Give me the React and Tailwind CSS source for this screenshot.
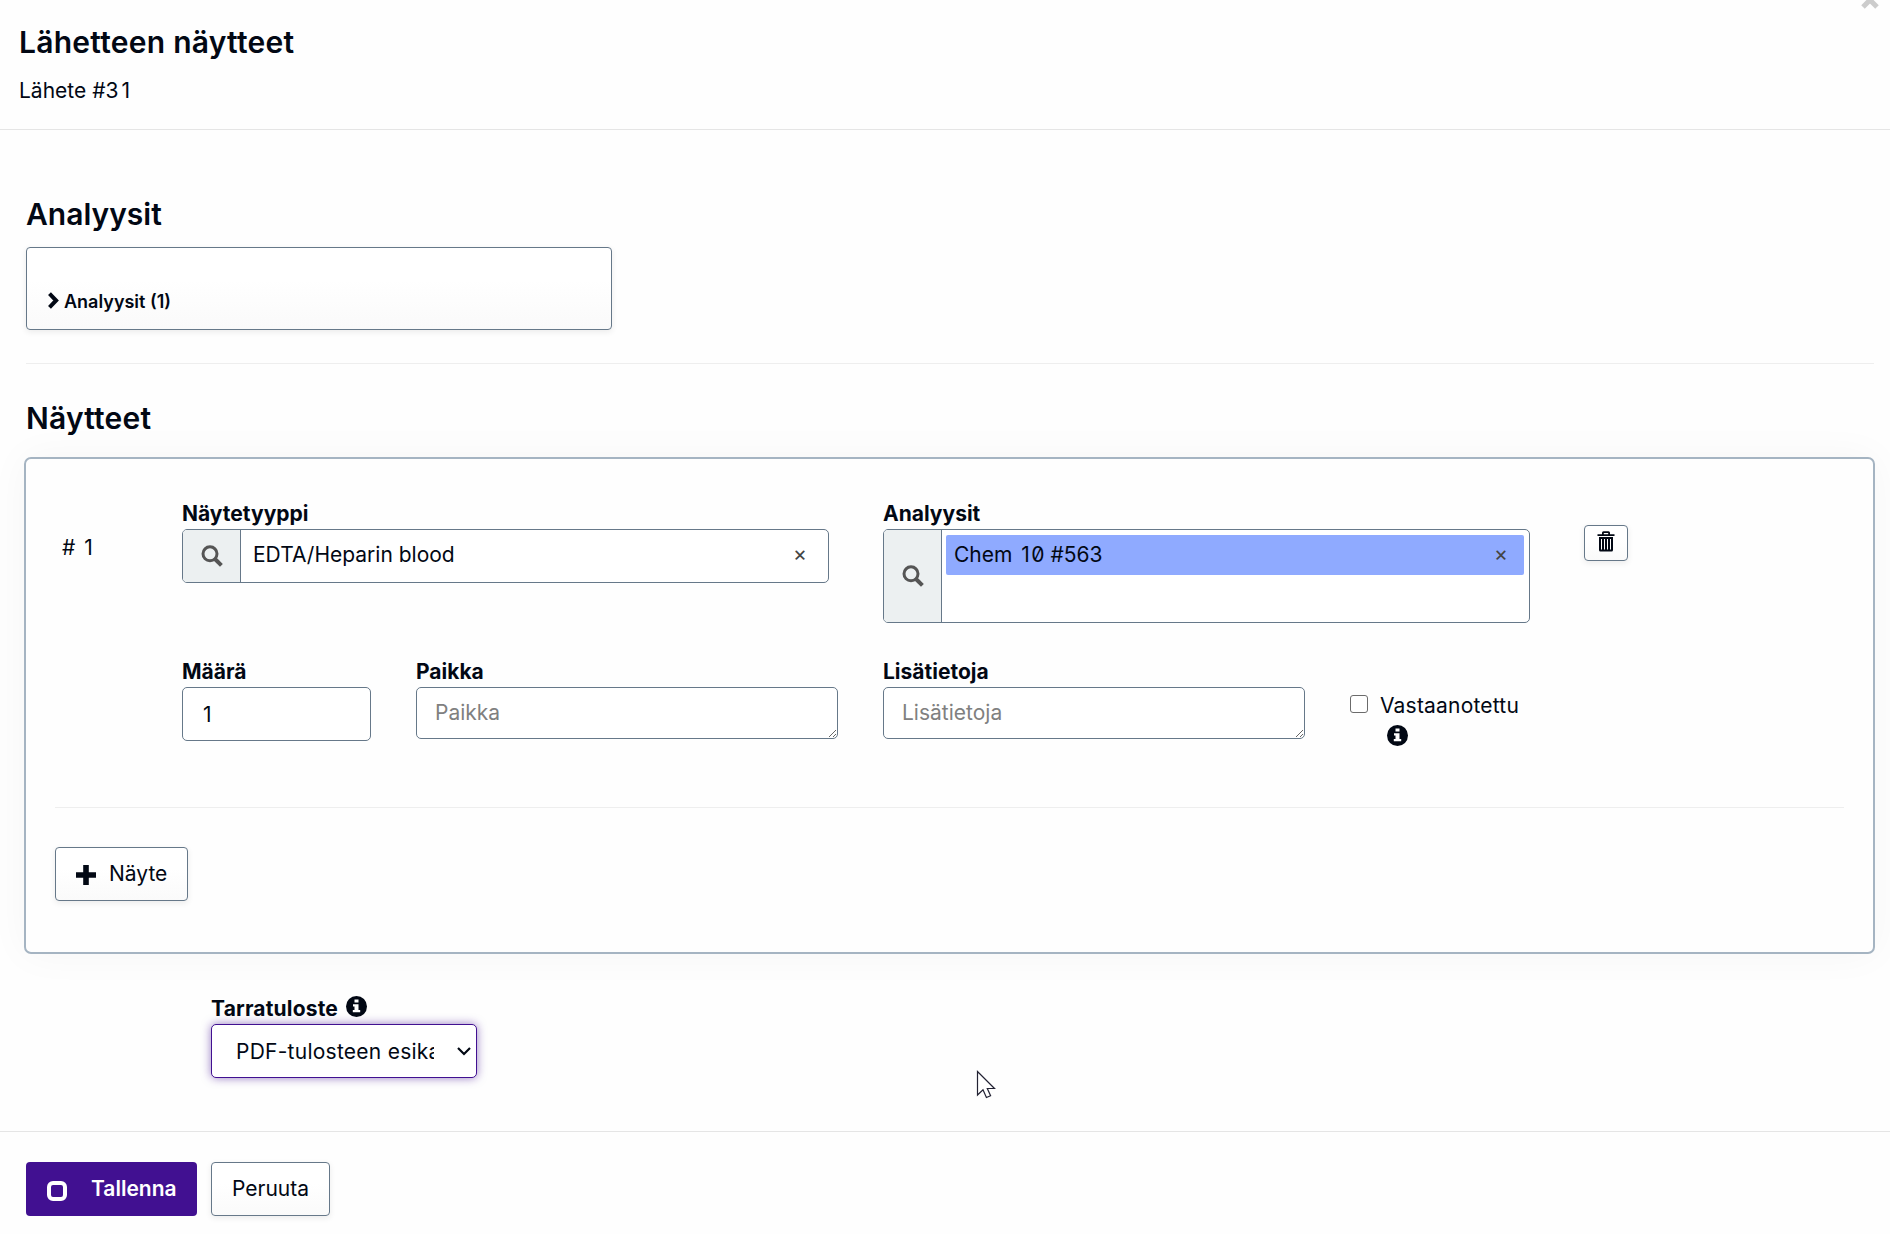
const inputBorder = "rounded-[5px] border border-[#667889] bg-white";
const whiteButton =
    "flex items-center rounded-[4px] border border-[#667889] bg-linear-to-b from-white from-40% to-[#fafafa] shadow-[0_2px_6px_rgba(0,0,0,0.08)]";

function SearchIcon() {
    return (
        <svg width="22" height="22" viewBox="0 0 22 22" fill="none" stroke="#555">
            <circle cx="9" cy="8.8" r="7" strokeWidth="3" />
            <path d="M14 14l6.4 6.4" strokeWidth="4" />
        </svg>
    );
}

function InfoIcon({ className }) {
    return (
        <svg width="21" height="21" viewBox="0 0 21 21" className={className}>
            <circle cx="10.5" cy="10.5" r="10.5" fill="#020814" />
            <path d="M8.500 3.500h4v3h-4zM7 8.300h5.500v5.700h1.700v2.300H6.800V14h1.700v-3.400H7z" fill="#fff" />
        </svg>
    );
}

function TrashIcon() {
    return (
        <svg width="18" height="21" viewBox="0 0 18 21" fill="#020814">
            <path d="M.5 3.200H5V1.800Q5 .3 6.500.3h5Q13 .3 13 1.800v1.400h4.500V5H.5zM6.800 3.200h4.400V2H6.800z" fillRule="evenodd" />
            <path d="M2 6h14v13q0 1.500-1.500 1.500h-11Q2 20.500 2 19zM4 8v10.500h1V8zM7 8v10.500h1V8zM10 8v10.500h1V8zM13 8v10.500h1V8z" fillRule="evenodd" />
        </svg>
    );
}

function Label({ children }) {
    return <label className="flex h-[27px] items-start font-bold leading-[24px]">{children}</label>;
}

// the digit one keeps its plain shape but takes a full figure width
function One() {
    return <span className="pl-[3px] pr-[1.500px]">1</span>;
}

function TextArea({ label }) {
    return (
        <div className="flex w-[422px] flex-col">
            <Label>{label}</Label>
            <textarea
                placeholder={label}
                className={`${inputBorder} block h-[52px] w-full resize px-[18px] py-[10px] leading-[30px] placeholder:text-[#808080]`}
            />
        </div>
    );
}

function SampleRow() {
    return (
        <div className="flex flex-col">
            <div className="flex h-[158px] items-start">
                <div className="mt-[32px] w-[127px] pl-[7px] leading-[28px]">
                    #&nbsp;<One />
                </div>
                <div className="w-[647px]">
                    <Label>Näytetyyppi</Label>
                    <div className={`${inputBorder} flex h-[54px] overflow-hidden`}>
                        <div className="flex w-[58px] items-center justify-center border-r border-[#667889] bg-[#ecf0f1]">
                            <SearchIcon />
                        </div>
                        <div className="flex h-[50px] flex-1 items-center justify-between pl-[12px] pr-[21px]">
                            <span>EDTA/Heparin blood</span>
                            <span className="mb-[3px] text-[#444]">×</span>
                        </div>
                    </div>
                </div>
                <div className="ml-[54px] w-[647px]">
                    <Label>Analyysit</Label>
                    <div className={`${inputBorder} flex h-[94px] overflow-hidden`}>
                        <div className="flex w-[58px] items-center justify-center border-r border-[#667889] bg-[#ecf0f1]">
                            <SearchIcon />
                        </div>
                        <div className="flex-1 pl-[4px] pr-[5px] pt-[5px]">
                            <div className="flex h-[40px] items-center justify-between rounded-[2px] bg-[#8faaff] pl-[8px] pr-[16px]">
                                <span>
                                    Chem <One />0 #563
                                </span>
                                <span className="mb-[3px] text-[#444]">×</span>
                            </div>
                        </div>
                    </div>
                </div>
                <button className={`${whiteButton} ml-[54px] mt-[23px] h-[36px] w-[44px] justify-center pb-[4px]`}>
                    <TrashIcon />
                </button>
            </div>
            <div className="flex items-start pl-[127px]">
                <div className="w-[189px]">
                    <Label>Määrä</Label>
                    <input defaultValue="1" className={`${inputBorder} block h-[54px] w-full pl-[20px] pr-[18px]`} />
                </div>
                <div className="ml-[45px]">
                    <TextArea label="Paikka" />
                </div>
                <div className="ml-[45px]">
                    <TextArea label="Lisätietoja" />
                </div>
                <div className="ml-[45px] mt-[32px]">
                    <label className="flex h-[28px] items-center tracking-[0.2px]">
                        <span className="mb-[4px] mr-[12px] size-[18px] rounded-[3px] border border-[#6b6b6b] bg-white" />
                        Vastaanotettu
                    </label>
                    <InfoIcon className="ml-[37px] mt-[5px]" />
                </div>
            </div>
        </div>
    );
}

export default function App() {
    return (
        <div className="relative flex h-[1234px] w-[1890px] flex-col overflow-hidden bg-[#fefefe] font-['Inter',sans-serif] text-[21px] text-[#020814] [font-feature-settings:'zero']">
            <header className="h-[130px] shrink-0 border-b border-[#e5e5e5] px-[19px] pt-[22px]">
                <h1 className="text-[30px] font-semibold leading-[40px] tracking-[0.25px]">Lähetteen näytteet</h1>
                <p className="mt-[14px] leading-[30px]">
                    Lähete #3<One />
                </p>
            </header>
            <svg width="20" height="20" viewBox="0 0 20 20" stroke="#ccc" strokeWidth="5" className="absolute left-[1860px] top-[-10px]">
                <path d="M3 3l14 14M17 3L3 17" />
            </svg>

            <main className="flex flex-1 flex-col pl-[25px] pr-[15px] pt-[64px]">
                <h2 className="pl-px text-[30px] font-semibold leading-[40px]">Analyysit</h2>
                <div className={`${whiteButton} ml-px mt-[13px] h-[83px] w-[586px] pl-[20px] pt-[26px] text-[18px] font-semibold`}>
                    <svg width="13" height="17" viewBox="0 0 13 17" fill="none" stroke="#020814" strokeWidth="4" className="mb-[3px] mr-[4px]">
                        <path d="M2.500 1.700l6.600 6.800-6.600 6.800" />
                    </svg>
                    Analyysit (1)
                </div>
                <hr className="ml-px mr-px mt-[33px] border-[#eeeeee]" />

                <h2 className="mt-[34px] pl-px text-[30px] font-semibold leading-[40px] tracking-[0.2px]">Näytteet</h2>
                <section className="ml-[-1px] mt-[19px] h-[497px] rounded-[7px] border-2 border-[#a5b4c2] bg-[#fefefe] pl-[29px] pr-[29px] pt-[43px] shadow-[0_0_40px_rgba(0,0,0,0.04)]">
                    <SampleRow />
                    <hr className="mt-[61px] border-[#eeeeee]" />
                    <button className={`${whiteButton} mt-[39px] h-[54px] w-[133px] pl-[20px]`}>
                        <svg width="20" height="20" viewBox="0 0 20 20" fill="#020814" className="mr-[13px] mt-px">
                            <path d="M7.200 0h5.600v7.200H20v5.600h-7.200V20H7.200v-7.200H0V7.200h7.200z" />
                        </svg>
                        Näyte
                    </button>
                </section>

                <div className="ml-[186px] mt-[43px] w-[266px]">
                    <Label>
                        <span className="tracking-[0.17px]">Tarratuloste</span>
                        <InfoIcon className="ml-[8px] mt-[-1px]" />
                    </Label>
                    <div className="flex h-[54px] items-center rounded-[5px] border border-[#411091] bg-white pl-[24px] pr-[5px] shadow-[0_0_10px_rgba(65,16,145,0.55)]">
                        <div className="mt-px w-[198px] overflow-hidden whitespace-nowrap tracking-[0.25px]">
                            PDF-tulosteen esikatselu
                        </div>
                        <svg width="14" height="9" viewBox="0 0 14 9" fill="none" stroke="#020814" strokeWidth="2.200" className="ml-auto">
                            <path d="M1 1l6 6 6-6" />
                        </svg>
                    </div>
                </div>
            </main>

            <footer className="flex h-[103px] shrink-0 items-start border-t border-[#e5e5e5] pl-[26px] pt-[30px]">
                <button className="flex h-[54px] w-[171px] items-center rounded-[4px] bg-[#411091] pl-[21px] font-semibold text-white">
                    <span className="mr-[24px] mt-[4px] size-[20px] rounded-[6px] border-4 border-white" />
                    Tallenna
                </button>
                <button className={`${whiteButton} ml-[14px] h-[54px] w-[119px] justify-center`}>Peruuta</button>
            </footer>

            <svg width="20" height="30" viewBox="0 0 20 30" fill="#fff" stroke="#222233" strokeWidth="1.200" className="absolute left-[976px] top-[1070px]">
                <path d="M1.500 1.500v23.500l5.500-5.200 3.400 7.700 4.200-1.800-3.300-7.200h7.200z" />
            </svg>
        </div>
    );
}
